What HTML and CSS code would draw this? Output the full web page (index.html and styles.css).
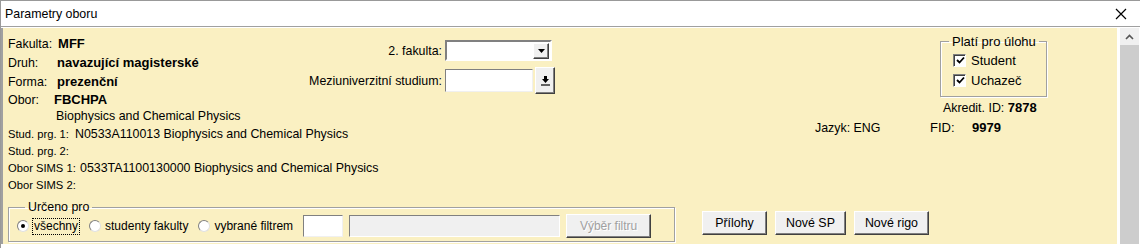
FILE: index.html
```html
<!DOCTYPE html>
<html lang="cs">
<head>
  <meta charset="UTF-8">
  <title>Parametry oboru</title>
  <link rel="stylesheet" href="styles.css">
</head>
<body>
  <div class="window">
    <div class="titlebar">
      <span>Parametry oboru</span>
      <svg class="close" width="12" height="12" viewBox="0 0 12 12"><path d="M1 1L11 11M11 1L1 11" stroke="#000" stroke-width="1.2"/></svg>
    </div>
    <div class="content">
      <div class="panel">
        <div class="top">
          <div class="info">
            <div class="row tall"><span class="lbl">Fakulta:</span><b class="val">MFF</b></div>
            <div class="row tall"><span class="lbl w49">Druh:</span><b class="val">navazující magisterské</b></div>
            <div class="row tall"><span class="lbl w49">Forma:</span><b class="val">prezenční</b></div>
            <div class="row"><span class="lbl w46">Obor:</span><b class="val">FBCHPA</b></div>
            <div class="row sub">Biophysics and Chemical Physics</div>
            <div class="row"><span class="lbl small w69">Stud. prg. 1:</span><span>N0533A110013 Biophysics and Chemical Physics</span></div>
            <div class="row short"><span class="lbl small">Stud. prg. 2:</span></div>
            <div class="row short"><span class="lbl small w72">Obor SIMS 1:</span><span>0533TA1100130000 Biophysics and Chemical Physics</span></div>
            <div class="row short"><span class="lbl small">Obor SIMS 2:</span></div>
          </div>
          <div class="mid">
            <label>2. fakulta:</label>
            <div class="combo">
              <span class="field"></span>
              <span class="drop"><svg width="7" height="4" viewBox="0 0 7 4"><path d="M0 0H7L3.5 4Z" fill="#000"/></svg></span>
            </div>
            <label>Meziuniverzitní studium:</label>
            <div class="lookup">
              <span class="field"></span>
              <span class="pick"><svg width="9" height="10" viewBox="0 0 9 10"><path d="M3 0H6V3H8L4.5 7L1 3H3Z" fill="#000"/><path d="M0 9H9" stroke="#000" stroke-width="1.2"/></svg></span>
            </div>
          </div>
          <div class="side">
            <fieldset class="role">
              <legend>Platí pro úlohu</legend>
              <div class="check"><span class="box"><svg width="9" height="9" viewBox="0 0 9 9"><path d="M1 4L3.5 6.5L8 1.5" fill="none" stroke="#000" stroke-width="1.8"/></svg></span>Student</div>
              <div class="check"><span class="box"><svg width="9" height="9" viewBox="0 0 9 9"><path d="M1 4L3.5 6.5L8 1.5" fill="none" stroke="#000" stroke-width="1.8"/></svg></span>Uchazeč</div>
            </fieldset>
            <div class="akr">Akredit. ID: <b>7878</b></div>
            <div class="lang"><span class="jazyk">Jazyk: ENG</span><span class="fid">FID:</span><b>9979</b></div>
          </div>
        </div>
        <div class="bottom">
          <fieldset class="target">
            <legend>Určeno pro</legend>
            <div class="radio"><span class="dot on"></span><span class="focus">všechny</span></div>
            <div class="radio"><span class="dot"></span>studenty fakulty</div>
            <div class="radio"><span class="dot"></span>vybrané filtrem</div>
            <span class="edit"></span>
            <span class="edit gray"></span>
            <span class="btn disabled">Výběr filtru</span>
          </fieldset>
          <div class="actions">
            <span class="btn">Přílohy</span>
            <span class="btn">Nové SP</span>
            <span class="btn">Nové rigo</span>
          </div>
        </div>
      </div>
      <div class="scrollbar">
        <div class="sb-up"><svg width="9" height="6" viewBox="0 0 9 6"><path d="M1 5L4.5 1.5L8 5" fill="none" stroke="#555" stroke-width="1.6"/></svg></div>
      </div>
    </div>
  </div>
</body>
</html>
```

FILE: styles.css
```css
body {
  margin: 0;
  font-family: 'Liberation Sans', Arial, sans-serif;
  font-size: 12.4px;
  color: #000;
  background: #fff;
}
.window {
  width: 1140px;
  height: 248px;
  border-top: 1px solid #999;
  border-left: 1px solid #999;
  box-sizing: border-box;
  overflow: hidden;
}
.titlebar {
  height: 25px;
  display: flex;
  align-items: center;
  justify-content: space-between;
  padding: 0 13px 0 4px;
  border-bottom: 1px solid #a0a0a0;
  background: #fff;
}
.close {
  display: block;
}
.content {
  display: flex;
  padding-top: 1px;
  height: 216px;
}
.panel {
  width: 1116px;
  background: #faf0c2;
  border-left: 2px solid #a0a0a0;
  padding: 6px 0 0 5px;
  box-sizing: border-box;
}
.top {
  display: flex;
}
.info {
  width: 296px;
}
.row {
  display: flex;
  align-items: baseline;
  height: 18px;
  line-height: 18px;
  white-space: nowrap;
}
.row.tall {
  height: 19px;
  line-height: 19px;
}
.row.short {
  height: 17px;
  line-height: 17px;
}
.lbl {
  margin-right: 6px;
}
.w49 { width: 43px; }
.w46 { width: 40px; }
.w69 { width: 63px; }
.w72 { width: 66px; }
.small {
  font-size: 11.2px;
}
.val {
  font-size: 13px;
}
.row.sub {
  padding-left: 48px;
  height: 16px;
  line-height: 14px;
}
.mid {
  display: grid;
  grid-template-columns: 138px auto;
  column-gap: 3px;
  row-gap: 6px;
  align-items: center;
  align-content: start;
  margin-top: 6px;
}
.mid label {
  text-align: right;
  white-space: nowrap;
}
.combo {
  display: flex;
  align-items: center;
  width: 107px;
  height: 21px;
  background: #fff;
  box-sizing: border-box;
  border: 2px solid;
  border-color: #808080 #fff #fff #808080;
  padding-right: 1px;
}
.combo .field {
  flex: 1;
}
.drop {
  width: 16px;
  height: 16px;
  display: flex;
  align-items: center;
  justify-content: center;
  background: #f0f0f0;
  box-sizing: border-box;
  border: 1px solid;
  border-color: #fff #404040 #404040 #fff;
  box-shadow: inset -1px -1px #808080;
}
.lookup {
  display: flex;
  align-items: center;
  gap: 2px;
}
.lookup .field {
  width: 88px;
  height: 23px;
  background: #fff;
  box-sizing: border-box;
  border: 1px solid;
  border-color: #808080 #f0f0f0 #f0f0f0 #808080;
}
.pick {
  width: 20px;
  height: 27px;
  display: flex;
  align-items: center;
  justify-content: center;
  background: #f0f0f0;
  box-sizing: border-box;
  border: 1px solid;
  border-color: #fff #404040 #404040 #fff;
  box-shadow: inset -1px -1px #808080;
}
.side {
  margin-left: auto;
  width: 302px;
  display: flex;
  flex-direction: column;
  align-items: flex-start;
}
fieldset {
  margin: 0;
  min-width: 0;
  border: 1px solid #a0a0a0;
  box-shadow: inset 1px 1px #fff, 1px 1px #fff;
}
legend {
  padding: 0 3px;
  white-space: nowrap;
}
.role {
  margin-left: 125px;
  width: 107px;
  box-sizing: border-box;
  padding: 1px 0 6px 12px;
}
.role legend {
  margin-left: -4px;
  font-size: 13px;
}
.check {
  display: flex;
  align-items: center;
  gap: 5px;
  height: 20px;
  font-size: 13px;
}
.box {
  width: 13px;
  height: 13px;
  box-sizing: border-box;
  background: #fff;
  border: 1px solid;
  border-color: #808080 #fff #fff #808080;
  box-shadow: inset 1px 1px #404040;
  display: flex;
  align-items: center;
  justify-content: center;
  padding: 1px 0 0 1px;
}
.akr {
  margin: 3px 0 0 128px;
  line-height: 16px;
}
.akr b,
.lang b {
  font-size: 13px;
}
.lang {
  display: flex;
  align-items: baseline;
  margin-top: 4px;
  line-height: 16px;
}
.jazyk {
  width: 115px;
}
.fid {
  width: 42px;
  font-size: 13px;
}
.bottom {
  display: flex;
  align-items: center;
  margin-top: 6px;
}
.target {
  width: 667px;
  box-sizing: border-box;
  display: flex;
  align-items: center;
  padding: 0 0 3px 8px;
  font-size: 12px;
}
.target legend {
  margin-left: 8px;
  font-size: 12.4px;
}
.radio {
  display: flex;
  align-items: center;
  margin-right: 10px;
  white-space: nowrap;
}
.dot {
  width: 12px;
  height: 12px;
  box-sizing: border-box;
  border-radius: 50%;
  background: #fff;
  border: 1px solid;
  border-color: #808080 #e0e0e0 #e0e0e0 #808080;
  margin-right: 4px;
  display: flex;
  align-items: center;
  justify-content: center;
}
.dot.on::after {
  content: "";
  width: 4px;
  height: 4px;
  border-radius: 50%;
  background: #000;
}
.focus {
  outline: 1px dotted #000;
  padding: 0 1px;
  line-height: 15px;
}
.edit {
  width: 40px;
  height: 22px;
  box-sizing: border-box;
  background: #fff;
  border: 1px solid;
  border-color: #808080 #f0f0f0 #f0f0f0 #808080;
  margin-right: 6px;
  flex: none;
}
.edit.gray {
  width: 211px;
  background: #f0f0f0;
  border-color: #808080 #fff #fff #808080;
}
.btn {
  display: inline-flex;
  align-items: center;
  justify-content: center;
  height: 24px;
  padding: 0 10px;
  background: #f0f0f0;
  box-sizing: border-box;
  border: 1px solid;
  border-color: #fff #404040 #404040 #fff;
  box-shadow: inset -1px -1px #808080;
  color: #000;
  white-space: nowrap;
}
.btn.disabled {
  width: 85px;
  color: #a0a0a0;
  text-shadow: 1px 1px #fff;
}
.actions {
  display: flex;
  gap: 8px;
  margin-left: 27px;
  margin-top: 4px;
}
.actions .btn {
  min-width: 65px;
}
.scrollbar {
  width: 19px;
  margin-left: 3px;
  background: #cdcdcd;
}
.sb-up {
  height: 17px;
  background: #f0f0f0;
  display: flex;
  align-items: center;
  justify-content: center;
}
```
